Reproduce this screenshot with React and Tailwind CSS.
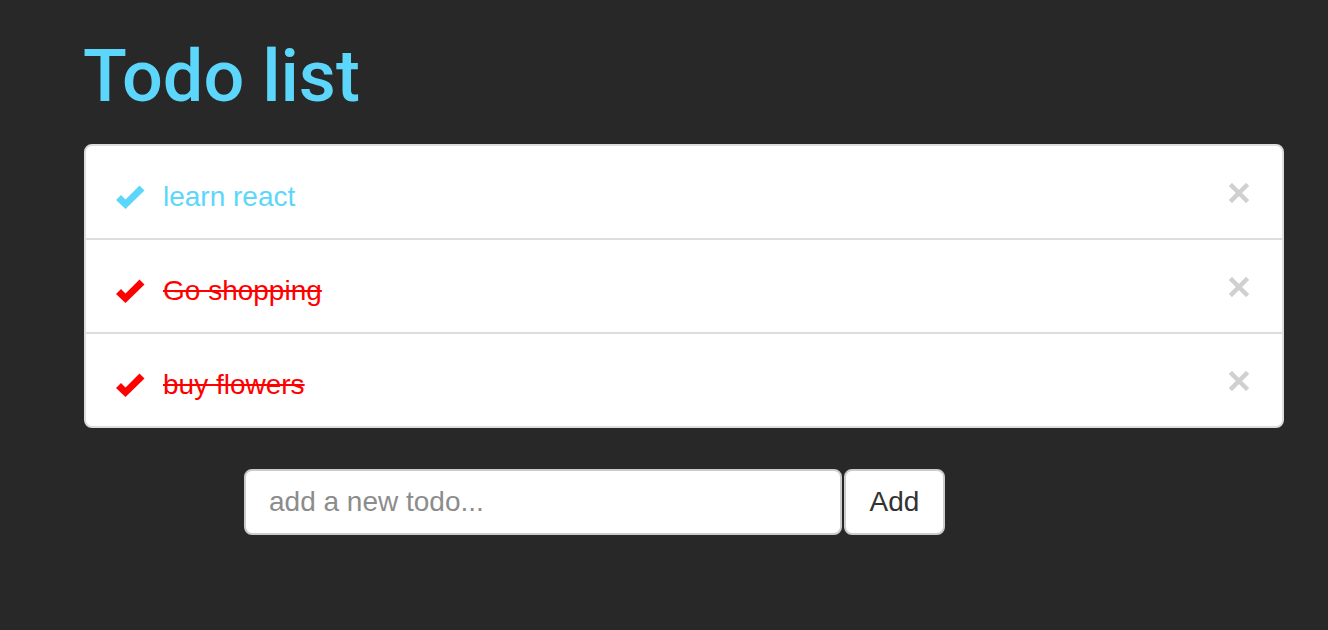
import { useState } from 'react'

const CheckIcon = ({ color }) => (
  <svg width="29" height="24" viewBox="0 0 29 24" className="flex-shrink-0">
    <polygon points="0,15 5,10 9.5,14.5 23.5,0.5 28.5,5.5 9.5,24" fill={color} />
  </svg>
)

const RemoveIcon = () => (
  <svg width="20" height="20" viewBox="0 0 20 20" className="-mt-[8px]">
    <path d="M3 3 L17 17 M17 3 L3 17" stroke="#d0d0d0" strokeWidth="4.5" strokeLinecap="square" />
  </svg>
)

const App = () => {
  const [todos] = useState([
    { id: 1, text: 'learn react', done: false },
    { id: 2, text: 'Go shopping', done: true },
    { id: 3, text: 'buy flowers', done: true },
  ])

  return (
    <div
      className="min-h-[630px] w-full bg-[#282828] pl-[84px] pr-[44px] pt-[37px]"
      style={{ fontFamily: '"Liberation Sans", Arial, sans-serif' }}
    >
      <h1
        className="text-[72px] leading-[79px] font-medium text-[#5cd6fa] -ml-[1px]"
        style={{ fontFamily: 'Roboto, "Liberation Sans", sans-serif' }}
      >
        Todo list
      </h1>

      <ul className="mt-[28px] bg-white border-2 border-[#dddddd] rounded-[8px] overflow-hidden">
        {todos.map((todo, i) => (
          <li
            key={todo.id}
            className={`flex items-center justify-between pt-[9px] pl-[30px] pr-[33px] ${i > 0 ? 'h-[94px] border-t-2 border-[#dddddd]' : 'h-[92px]'}`}
          >
            <div className="flex items-center gap-[18px]">
              <CheckIcon color={todo.done ? '#ff0000' : '#5cd6fa'} />
              <span
                className={`text-[28px] leading-[40px] ${todo.done ? 'text-[#ff0000] line-through' : 'text-[#5cd6fa]'}`}
              >
                {todo.text}
              </span>
            </div>
            <RemoveIcon />
          </li>
        ))}
      </ul>

      <form className="flex gap-[2px] mt-[41px] ml-[160px]" onSubmit={e => e.preventDefault()}>
        <input
          type="text"
          placeholder="add a new todo..."
          className="w-[598px] h-[66px] bg-white border-2 border-[#cccccc] rounded-[8px] px-[23px] text-[28px] text-[#555] placeholder:text-[#8c8c8c] outline-none"
        />
        <button
          type="submit"
          className="w-[101px] h-[66px] bg-white border-2 border-[#cccccc] rounded-[8px] text-[28px] text-[#333]"
        >
          Add
        </button>
      </form>
    </div>
  )
}

export default App
